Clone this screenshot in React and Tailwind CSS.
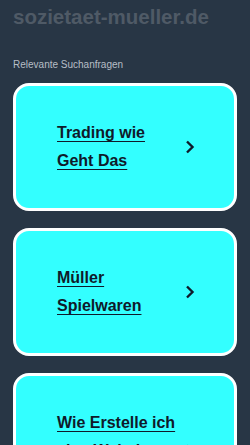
const searches = [
  ["Trading wie", "Geht Das"],
  ["Müller", "Spielwaren"],
  ["Wie Erstelle ich", "eine Website", "Kostenlos"],
];

const Chevron = () => (
  <svg width="12" height="14" viewBox="0 0 12 14" fill="none" className="shrink-0">
    <path d="M3 1.5 L8.5 7 L3 12.5" stroke="#0f1a2a" strokeWidth="2.4" />
  </svg>
);

const Card = ({ lines }) => (
  <a
    href="#"
    className="flex items-center rounded-[16px] border-[3px] border-white bg-[#33ffff] py-[33px] pl-[41px] pr-[38px]"
  >
    <span className="flex-1 text-[16px] font-bold leading-[28px] text-[#0f1a2a] underline underline-offset-[3px]">
      {lines.map((l, i) => (
        <span key={i} className="block">
          {l}
        </span>
      ))}
    </span>
    <Chevron />
  </a>
);

export default function App() {
  return (
    <div className="min-h-[445px] bg-[#283645] px-[13px] pt-[4px] font-['Liberation_Sans',Arial,sans-serif]">
      <h1 className="text-[20.5px] font-bold leading-[26px] text-[#4f5a66]">
        sozietaet-mueller.de
      </h1>
      <p className="mt-[29px] text-[10px] leading-[12px] text-[#b7bec6]">
        Relevante Suchanfragen
      </p>
      <div className="mt-[12px] flex flex-col gap-[17px]">
        {searches.map((s) => (
          <Card key={s[0]} lines={s} />
        ))}
      </div>
    </div>
  );
}
